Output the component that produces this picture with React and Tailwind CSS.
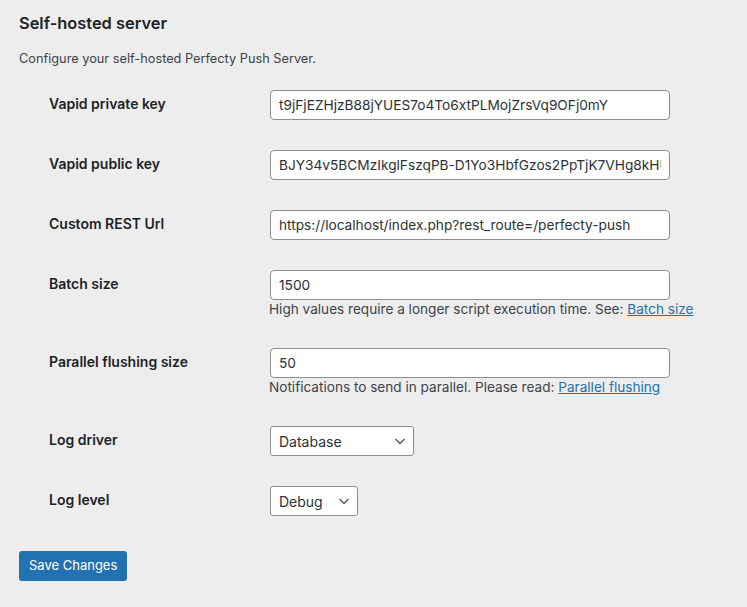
import { useState } from "react";

const font = { fontFamily: "Inter, 'Noto Sans', sans-serif" };

function Chevron() {
  return (
    <svg
      className="pointer-events-none absolute right-[8px] top-1/2 h-[12px] w-[12px] -translate-y-1/2"
      viewBox="0 0 12 12"
      fill="none"
    >
      <path d="M1.5 4l4.5 4.5L10.5 4" stroke="#50575e" strokeWidth="1.4" />
    </svg>
  );
}

function Row({ label, children }) {
  return (
    <div className="flex pl-[30px]">
      <div className="w-[221px] shrink-0 pt-[20px] text-[14px] font-semibold leading-[18px] text-[#1d2327]">
        {label}
      </div>
      <div className="py-[15px]">{children}</div>
    </div>
  );
}

function TextField({ value }) {
  const [v, setV] = useState(value);
  return (
    <input
      value={v}
      onChange={(e) => setV(e.target.value)}
      className="block h-[30px] w-[400px] rounded-[4px] border border-[#8c8f94] bg-white px-[8px] text-[13.7px] text-[#2c3338] outline-none"
      style={font}
    />
  );
}

function SelectField({ value, options, width }) {
  const [v, setV] = useState(value);
  return (
    <div className={`relative ${width}`}>
      <select
        value={v}
        onChange={(e) => setV(e.target.value)}
        className="block h-[30px] w-full appearance-none rounded-[3px] border border-[#8c8f94] bg-white pl-[8px] pr-[24px] text-[14px] text-[#2c3338] outline-none"
        style={font}
      >
        {options.map((o) => (
          <option key={o}>{o}</option>
        ))}
      </select>
      <Chevron />
    </div>
  );
}

function Help({ text, link }) {
  return (
    <p className="-ml-px text-[13.6px] leading-[18px] text-[#3c434a]">
      {text}{" "}
      <a href="#" className="text-[#2271b1] underline">
        {link}
      </a>
    </p>
  );
}

export default function App() {
  return (
    <div
      className="min-h-[607px] bg-[#ededed] px-[19px] pt-[12px]"
      style={font}
    >
      <h2 className="text-[16.4px] font-semibold leading-[22px] text-[#1d2327]">
        Self-hosted server
      </h2>
      <p className="mt-[15px] text-[12.75px] leading-[20px] text-[#3c434a]">
        Configure your self-hosted Perfecty Push Server.
      </p>

      <div className="mt-[6px]">
        <Row label="Vapid private key">
          <TextField value="t9jFjEZHjzB88jYUES7o4To6xtPLMojZrsVq9OFj0mY" />
        </Row>
        <Row label="Vapid public key">
          <TextField value="BJY34v5BCMzIkglFszqPB-D1Yo3HbfGzos2PpTjK7VHg8kHUq3xE0n1bR" />
        </Row>
        <Row label="Custom REST Url">
          <TextField value="https://localhost/index.php?rest_route=/perfecty-push" />
        </Row>
        <Row label="Batch size">
          <TextField value="1500" />
          <Help
            text="High values require a longer script execution time. See:"
            link="Batch size"
          />
        </Row>
        <Row label="Parallel flushing size">
          <TextField value="50" />
          <Help
            text="Notifications to send in parallel. Please read:"
            link="Parallel flushing"
          />
        </Row>
        <Row label="Log driver">
          <SelectField
            value="Database"
            options={["Database", "Error log"]}
            width="w-[144px]"
          />
        </Row>
        <Row label="Log level">
          <SelectField
            value="Debug"
            options={["Debug", "Info", "Warning", "Error"]}
            width="w-[88px]"
          />
        </Row>
      </div>

      <button
        type="button"
        className="mt-[20px] h-[30px] rounded-[3px] bg-[#2271b1] px-[10px] text-[13px] text-white"
        style={font}
      >
        Save Changes
      </button>
    </div>
  );
}
